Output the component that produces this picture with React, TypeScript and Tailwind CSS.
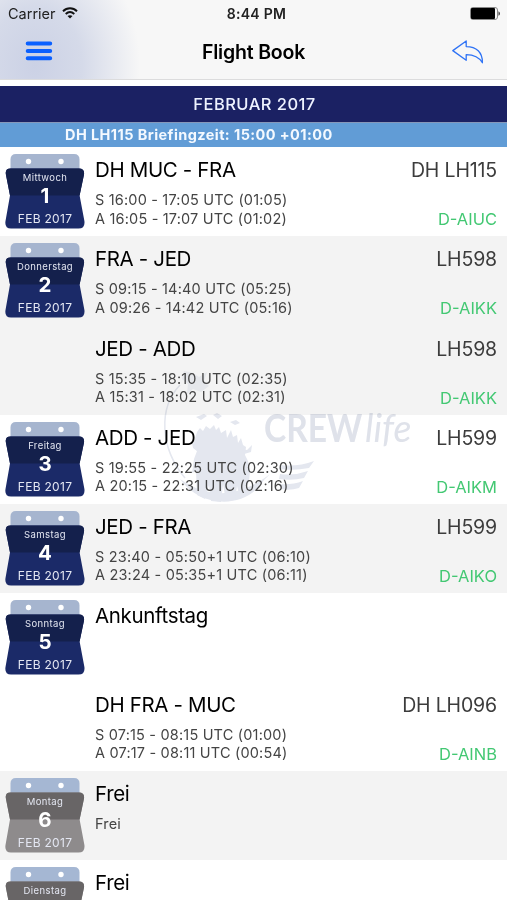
import React from "react";

type Entry = {
  day?: string;
  date?: number;
  free?: boolean;
  shaded?: boolean;
  title: string;
  lines?: string[];
  flight?: string;
  reg?: string;
};

const entries: Entry[] = [
  { day: "Mittwoch", date: 1, title: "DH MUC - FRA", lines: ["S 16:00 - 17:05 UTC (01:05)", "A 16:05 - 17:07 UTC (01:02)"], flight: "DH LH115", reg: "D-AIUC" },
  { day: "Donnerstag", date: 2, shaded: true, title: "FRA - JED", lines: ["S 09:15 - 14:40 UTC (05:25)", "A 09:26 - 14:42 UTC (05:16)"], flight: "LH598", reg: "D-AIKK" },
  { shaded: true, title: "JED - ADD", lines: ["S 15:35 - 18:10 UTC (02:35)", "A 15:31 - 18:02 UTC (02:31)"], flight: "LH598", reg: "D-AIKK" },
  { day: "Freitag", date: 3, title: "ADD - JED", lines: ["S 19:55 - 22:25 UTC (02:30)", "A 20:15 - 22:31 UTC (02:16)"], flight: "LH599", reg: "D-AIKM" },
  { day: "Samstag", date: 4, shaded: true, title: "JED - FRA", lines: ["S 23:40 - 05:50+1 UTC (06:10)", "A 23:24 - 05:35+1 UTC (06:11)"], flight: "LH599", reg: "D-AIKO" },
  { day: "Sonntag", date: 5, title: "Ankunftstag" },
  { title: "DH FRA - MUC", lines: ["S 07:15 - 08:15 UTC (01:00)", "A 07:17 - 08:11 UTC (00:54)"], flight: "DH LH096", reg: "D-AINB" },
  { day: "Montag", date: 6, free: true, shaded: true, title: "Frei", lines: ["Frei"] },
  { day: "Dienstag", free: true, title: "Frei" },
];

function StatusBar() {
  return (
    <div className="grid h-7 grid-cols-3 items-center pl-2 pr-1.5 text-[14.5px] leading-none text-[#222]">
      <div className="flex items-center gap-1.5">
        <span>Carrier</span>
        <svg className="-mt-0.5" width="16" height="12" viewBox="0 0 16 12" fill="none" stroke="#111" strokeWidth="1.9">
          <path d="M1 4.2C5 .3 11 .3 15 4.2" />
          <path d="M3.7 7C6.3 4.6 9.7 4.6 12.3 7" />
          <path d="M8 11.6 5.5 9.1C7 7.8 9 7.8 10.5 9.1Z" fill="#111" stroke="none" />
        </svg>
      </div>
      <span className="pl-1 text-center text-[14px] font-semibold tracking-[0.3px]">8:44 PM</span>
      <svg className="-mt-0.5 justify-self-end" width="31" height="13" viewBox="0 0 31 13">
        <rect x=".5" y=".5" width="27" height="12" rx="2.5" fill="none" stroke="#888" />
        <rect x="1" y="1" width="24" height="11" rx="1" fill="#000" />
        <path d="M28.5 4.2C30.4 5 30.4 8 28.5 8.8Z" fill="#333" />
      </svg>
    </div>
  );
}

function NavBar() {
  return (
    <div className="flex h-[51px] items-center justify-between pl-[25px] pr-[23px]">
      <svg className="-mt-[5px]" width="28" height="20" viewBox="0 0 28 20" stroke="#0a60ff" strokeWidth="4" strokeLinecap="round">
        <path d="M2.7 2.5h22.5M2.7 9.9h22.5M2.7 17.2h22.5" />
      </svg>
      <h1 className="-mt-px pl-0.5 text-[19.5px] font-semibold tracking-[-0.2px] text-black">Flight Book</h1>
      <svg className="-mt-[3px]" width="32" height="24" viewBox="0 0 32 24" fill="none" stroke="#2f73f5" strokeWidth="1.3" strokeLinejoin="round">
        <path d="M.8 10.6 14.2 1V6.6C24.5 6.6 30.6 12.4 30.4 22.8 27 16.8 21.7 14.6 14.2 14.6V20.3Z" />
      </svg>
    </div>
  );
}

function CalendarBadge({ day, date, free }: { day: string; date?: number; free?: boolean }) {
  return (
    <div className="relative h-[76px] w-20">
      <svg className="absolute inset-0" width="80" height="76" viewBox="0 0 80 76">
        <path d="M5.5 18V6.5Q5.5 1 11 1H69Q74.5 1 74.5 6.5V18Z" fill={free ? "#a5b7d3" : "#a6b5cf"} />
        <circle cx="23.5" cy="8.5" r="2.7" fill="#fff" />
        <circle cx="56" cy="8.5" r="2.7" fill="#fff" />
        <path
          d="M5.5 15.5H74Q80 15.5 78.9 22L74.6 42.5L79.4 68Q80.3 75.5 73.5 75.5H6Q-.6 75.5 .5 68L5 42.5L1 22Q-.4 15.5 5.5 15.5Z"
          fill={free ? "#8e8b8c" : "#1b2a68"}
        />
        <path
          d="M5.5 15.5H74Q80 15.5 78.9 22L74.6 42.5H5L1 22Q-.4 15.5 5.5 15.5Z"
          fill={free ? "#686566" : "#14204c"}
        />
      </svg>
      <div className="relative flex flex-col items-center text-[#e4e7f2]">
        <span className="mt-[19px] text-[9.5px] leading-3 tracking-[0.4px]">{day}</span>
        <span className="mt-0.5 h-5 text-[20.5px] font-bold leading-5 text-white">{date}</span>
        <span className="mt-[7px] text-[12px] leading-3 tracking-[0.3px]">FEB 2017</span>
      </div>
    </div>
  );
}

function EntryRow({ entry }: { entry: Entry }) {
  return (
    <div className={`flex h-[89.1px] shrink-0 pl-[5px] pr-2.5 ${entry.shaded ? "bg-[#f3f3f3]" : "bg-white"}`}>
      <div className="w-[90px] shrink-0 pt-1.5">
        {entry.day && <CalendarBadge day={entry.day} date={entry.date} free={entry.free} />}
      </div>
      <div className="relative z-10 flex-1 pt-[11px]">
        <h2 className="text-[20.5px] leading-6 tracking-[-0.35px] text-black">{entry.title}</h2>
        <div className="mt-[9px] text-[14.5px] leading-[18.5px] tracking-[0.18px] text-[#444]">
          {entry.lines?.map((line) => (
            <p key={line}>{line}</p>
          ))}
        </div>
      </div>
      <div className="relative z-10 flex flex-col items-end pt-[11px]">
        <span className="text-[19.5px] leading-6 tracking-[-0.15px] text-[#3c3c3c]">{entry.flight}</span>
        <span className="mt-[27px] text-[16.5px] leading-5 text-[#43c873]">{entry.reg}</span>
      </div>
    </div>
  );
}

function Watermark() {
  return (
    <>
      <svg className="pointer-events-none absolute left-[155px] top-[360px] mix-blend-multiply" width="165" height="150" viewBox="155 360 165 150" fill="#e4e7ef">
        <path d="M184 371l9 2 6 4 8-5-3 9 5 5-8 6-8-3-6 5 1-10-6-5Z" opacity=".5" />
        <path d="M180 385C158 408 160 448 185 478" fill="none" stroke="#e4e7ef" strokeWidth="1.5" />
        <path d="M180 479C200 508 246 510 264 480L270 474C240 497 210 500 180 479Z" />
        <path d="M197 432l3-4 3 3 3-5 4 3 4-4 2 5 3-3 2 6 5-3 1 8 4-8 2 7 4-2 1 8 3-5 2 7 3 2-1 8 3 6 2 10-1 10-4 12-5 5-3-12-2 14-9 1-3-17-2 18-10-1-2-16-4 14-8-4-1-24-4 2 2-14 3-8-4-6Z" />
        <path d="M197 445l-5-2 1 5 4 3Z" />
        <path d="M196 417l8-3 3 2-6 4ZM213 415l4-2 5 3-4 3ZM230 422l6-2 4 3-5 2ZM242 449l5 1 5-5-1 7-7 2Z" />
        <path d="M280 465Q298 467 314 461L309 468Q294 471 279 469ZM280 474Q294 476 308 471L304 478Q292 481 279 479ZM279 484Q292 485 303 481L299 488Q290 491 281 489Z" />
      </svg>
      <div className="pointer-events-none absolute left-[264px] top-[408px] flex items-baseline gap-[3px] font-['Lato',sans-serif] leading-none text-[#dfe2ea] mix-blend-multiply">
        <span className="w-[98px] text-[39px] font-bold">
          <span className="inline-block origin-left scale-x-[0.86]">CREW</span>
        </span>
        <span className="text-[39px] italic">
          <span className="inline-block origin-left scale-x-[0.96]">life</span>
        </span>
      </div>
    </>
  );
}

export default function App() {
  return (
    <div className="relative flex h-[900px] w-[507px] flex-col overflow-hidden bg-white font-['Inter',sans-serif]">
      <header className="h-20 shrink-0 border-b border-[#dcdcdd] bg-[#f7f7f7] bg-[radial-gradient(ellipse_105px_130px_at_35px_65px,#cbd1e5_0%,#d5dae9_45%,#f7f7f700_100%)]">
        <StatusBar />
        <NavBar />
      </header>
      <div className="mt-1.5 flex h-9 shrink-0 items-center justify-center bg-[#1b2163] pl-0.5 text-[16.5px] font-medium tracking-[0.45px] text-[#eef2ff]">
        FEBRUAR 2017
      </div>
      <div className="flex h-[25.4px] shrink-0 items-center border-t border-[#8697b9] bg-[#619cd6] pb-px pl-[65px] text-[14.5px] font-bold tracking-[0.42px] text-[#f4f9ff]">
        DH LH115 Briefingzeit: 15:00 +01:00
      </div>
      <main className="flex flex-col">
        {entries.map((entry, idx) => (
          <EntryRow key={idx} entry={entry} />
        ))}
      </main>
      <Watermark />
    </div>
  );
}
